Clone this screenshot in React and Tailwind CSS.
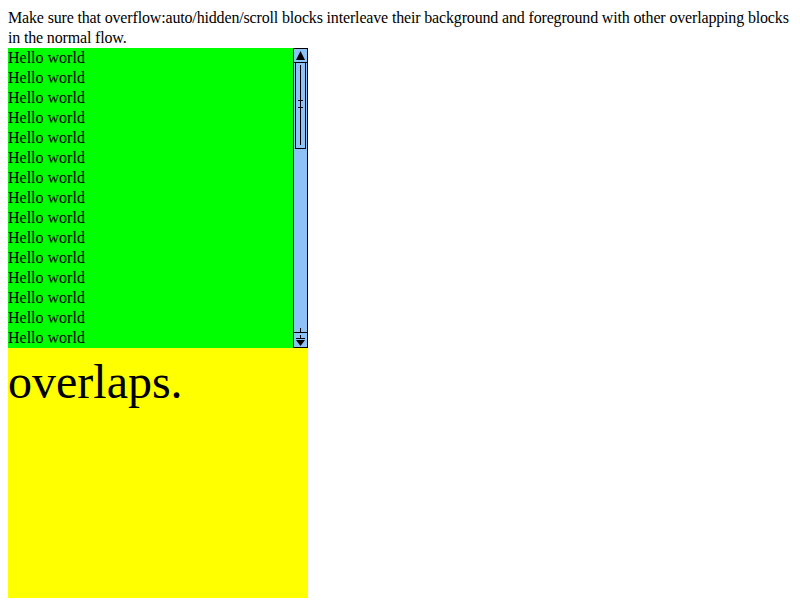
import React from 'react';

const lines = Array.from({ length: 15 }, (_, i) => i);

const Arrow = ({ down }) => (
    <svg width="13" height="13" viewBox="0 0 13 13" className="block">
        {down ? (
            <>
                <rect x="6" y="1" width="1" height="3" fill="#000" />
                <rect x="2" y="4" width="9" height="1" fill="#000" />
                <polygon points="2,6 11,6 6.5,12" fill="#000" />
            </>
        ) : (
            <polygon points="6.5,2 11,11 2,11" fill="#000" />
        )}
    </svg>
);

const Scrollbar = () => (
    <div className="w-[15px] h-full flex flex-col bg-[#8cc2f8] border-l border-black">
        <div className="h-[15px] border-r border-b border-t border-black flex items-center justify-center">
            <Arrow />
        </div>
        <div className="flex-1 border-r border-black relative">
            {/* thumb */}
            <div className="absolute left-[1px] top-0 w-[11px] h-[86px] border border-black border-t-0">
                <div className="absolute left-[4px] top-[2px] w-[1px] h-[80px] bg-black" />
                <div className="absolute left-[2px] top-[37px] w-[5px] h-[1px] bg-black" />
                <div className="absolute left-[2px] top-[44px] w-[5px] h-[1px] bg-black" />
            </div>
            <div className="absolute left-[6px] bottom-0 w-[1px] h-[4px] bg-black" />
        </div>
        <div className="h-[16px] border-r border-t border-b border-black flex items-center justify-center">
            <Arrow down />
        </div>
    </div>
);

export default function App() {
    return (
        <div className="p-[8px] pb-0 text-[16px] leading-[20px] text-black bg-white h-[600px] overflow-hidden" style={{ fontFamily: '"Liberation Serif", "Times New Roman", serif' }}>
            <p className="tracking-[-0.16px]">
                Make sure that overflow:auto/hidden/scroll blocks interleave their background and foreground with other overlapping blocks in the normal flow.
            </p>
            <div className="w-[300px] h-[300px] bg-[#00ff00] flex">
                <div className="flex-1 overflow-hidden">
                    {lines.map((i) => (
                        <div key={i}>Hello world</div>
                    ))}
                </div>
                <Scrollbar />
            </div>
            <div className="w-[300px] h-[250px] bg-[#ffff00] text-[48px] leading-[55px] pt-[6px]">
                overlaps.
            </div>
        </div>
    );
}
